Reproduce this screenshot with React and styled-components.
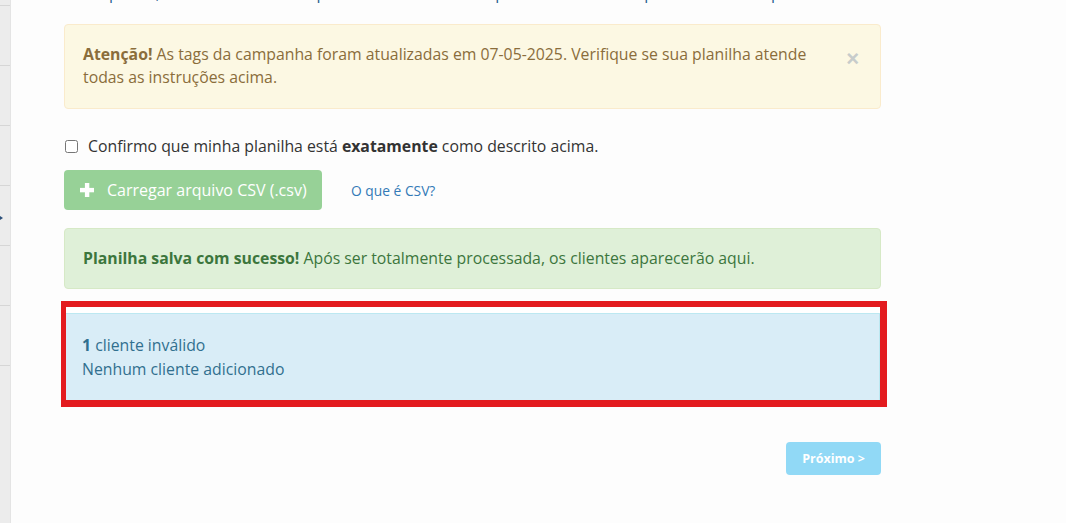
import React from 'react';
import styled, { createGlobalStyle } from 'styled-components';

const GlobalStyle = createGlobalStyle`
  html, body {
    margin: 0;
    padding: 0;
    background: #fff;
  }
  body {
    font-family: "Open Sans", "Noto Sans", Arial, sans-serif;
    font-size: 15.8px;
    line-height: 23px;
    color: #333;
  }
`;

const Page = styled.div`
  display: flex;
  width: 1066px;
  height: 523px;
  overflow: hidden;
  background: #fdfdfd;
`;

const Sidebar = styled.div`
  position: relative;
  width: 10px;
  flex: none;
  background: #ececec;
  border-right: 1px solid #e4e4e4;
  display: flex;
  flex-direction: column;
`;

const SideItem = styled.div`
  height: 59px;
  flex: none;
  border-top: 1px solid #d6d6d6;
  &:first-child {
    height: 5px;
    border-top: none;
  }
`;

const SideArrow = styled.div`
  position: absolute;
  left: -3px;
  top: 214px;
  width: 0;
  height: 0;
  border-top: 4px solid transparent;
  border-bottom: 4px solid transparent;
  border-left: 6px solid #2b4f7a;
`;

const Main = styled.main`
  flex: 1;
  padding-left: 53px;
`;

const Content = styled.div`
  width: 817px;
  display: flex;
  flex-direction: column;
`;

const CutText = styled.p`
  margin: -18px 0 0;
  height: 23px;
  white-space: nowrap;
  color: #2a5f8f;
`;

const Alert = styled.div`
  position: relative;
  padding: 18px 40px 19px 18px;
  border: 1px solid ${(p) => p.$border};
  border-radius: 4px;
  background: ${(p) => p.$bg};
  color: ${(p) => p.$color};
  b {
    font-weight: 700;
  }
`;

const WarningAlert = styled(Alert)`
  margin-top: 19px;
`;

const Close = styled.span`
  position: absolute;
  right: 21px;
  top: 22px;
  font-size: 22px;
  line-height: 24px;
  font-weight: 700;
  color: #c7cccb;
  font-family: "Liberation Sans", Arial, sans-serif;
`;

const CheckRow = styled.label`
  display: flex;
  align-items: center;
  gap: 10px;
  margin-top: 25px;
  height: 24px;
  input {
    margin: 0 0 0 1px;
    width: 13px;
    height: 13px;
  }
  b {
    font-weight: 700;
  }
`;

const ActionRow = styled.div`
  display: flex;
  align-items: center;
  gap: 29px;
  margin-top: 12px;
`;

const UploadButton = styled.button`
  display: flex;
  align-items: center;
  gap: 13px;
  height: 40px;
  width: 258px;
  padding: 0 0 0 16px;
  border: none;
  border-radius: 4px;
  background: #97d197;
  color: #fff;
  font-family: inherit;
  font-size: 16px;
  cursor: not-allowed;
`;

const HelpLink = styled.a`
  color: #337ab7;
  font-size: 13.8px;
  text-decoration: none;
`;

const SuccessAlert = styled(Alert)`
  margin-top: 18px;
  padding-bottom: 18px;
`;

const Frame = styled.div`
  margin: 12px 0 0 -3px;
  width: 814px;
  padding-top: 6px;
  border-style: solid;
  border-color: #e31b1f;
  border-width: 6px 7px 7px 5px;
  background: #fff;
`;

const InfoAlert = styled(Alert)`
  padding: 19px 16px 19px;
  line-height: 24px;
  border-radius: 0;
  border-bottom: none;
  border-left: none;
`;

const Footer = styled.div`
  display: flex;
  justify-content: flex-end;
  margin-top: 35px;
`;

const NextButton = styled.button`
  height: 33px;
  width: 95px;
  border: none;
  border-radius: 4px;
  background: #91d9f6;
  color: #fff;
  font-family: inherit;
  font-size: 12.5px;
  font-weight: 700;
  cursor: not-allowed;
`;

const PlusIcon = () => (
  <svg width="14" height="14" viewBox="0 0 14 14">
    <rect x="4.9" y="0" width="4.4" height="14" fill="#fff" />
    <rect x="0" y="4.9" width="14" height="4.4" fill="#fff" />
  </svg>
);

export default function App() {
  return (
    <>
      <GlobalStyle />
      <Page>
        <Sidebar>
          {Array.from({ length: 8 }).map((_, i) => (
            <SideItem key={i} />
          ))}
          <SideArrow />
        </Sidebar>
        <Main>
          <Content>
            <CutText>
              A campanha, o nome e a coluna e preenchida com o texto padrão da lista e da planilha e o total por linha da tabela
            </CutText>
            <WarningAlert $bg="#fcf8e3" $border="#faebcc" $color="#8a6d3b">
              <b>Atenção!</b> As tags da campanha foram atualizadas em 07-05-2025. Verifique se sua planilha atende
              todas as instruções acima.
              <Close>×</Close>
            </WarningAlert>
            <CheckRow>
              <input type="checkbox" />
              <span>
                Confirmo que minha planilha está <b>exatamente</b> como descrito acima.
              </span>
            </CheckRow>
            <ActionRow>
              <UploadButton disabled>
                <PlusIcon />
                Carregar arquivo CSV (.csv)
              </UploadButton>
              <HelpLink href="#">O que é CSV?</HelpLink>
            </ActionRow>
            <SuccessAlert $bg="#dff0d8" $border="#d6e9c6" $color="#3c763d">
              <b>Planilha salva com sucesso!</b> Após ser totalmente processada, os clientes aparecerão aqui.
            </SuccessAlert>
            <Frame>
              <InfoAlert $bg="#d9edf7" $border="#bce8f1" $color="#31708f">
                <b>1</b> cliente inválido
                <br />
                Nenhum cliente adicionado
              </InfoAlert>
            </Frame>
            <Footer>
              <NextButton disabled>Próximo &gt;</NextButton>
            </Footer>
          </Content>
        </Main>
      </Page>
    </>
  );
}
